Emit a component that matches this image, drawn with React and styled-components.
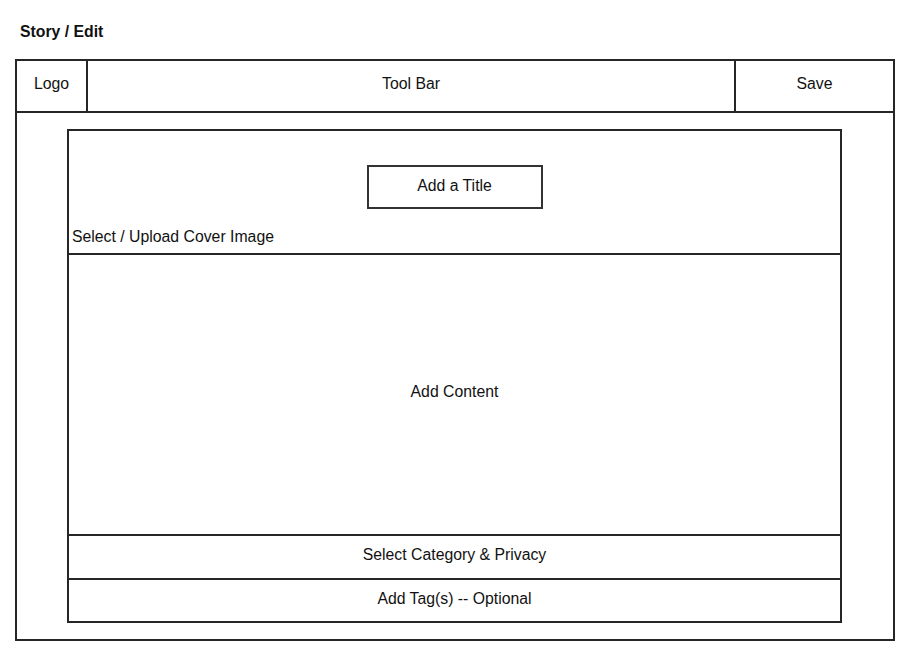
import React from 'react'
import styled, { createGlobalStyle } from 'styled-components'

const GlobalStyle = createGlobalStyle`
  * {
    box-sizing: border-box;
  }
  body {
    margin: 0;
    background: #ffffff;
    font-family: 'Liberation Sans', Arial, sans-serif;
    color: #111111;
  }
`

const Page = styled.div`
  width: 912px;
  height: 665px;
  padding: 23px 0 0 15px;
`

const PageTitle = styled.h1`
  margin: 0 0 0 5px;
  font-size: 15.8px;
  line-height: 18px;
  font-weight: 700;
`

const Frame = styled.div`
  margin-top: 18px;
  width: 880px;
  height: 582px;
  border: 2px solid #262626;
  display: flex;
  flex-direction: column;
`

const TopBar = styled.div`
  height: 52px;
  display: flex;
  border-bottom: 2px solid #262626;
  flex-shrink: 0;
`

const BarCell = styled.div`
  width: ${(p) => (p.$width ? `${p.$width}px` : 'auto')};
  flex: ${(p) => (p.$width ? 'none' : '1')};
  display: flex;
  align-items: center;
  justify-content: center;
  font-size: 15.8px;
  padding-bottom: 4px;
  border-left: ${(p) => (p.$divider ? '2px solid #262626' : 'none')};
`

const Body = styled.div`
  flex: 1;
  padding: 16px 0 16px 50px;
`

const Editor = styled.div`
  width: 775px;
  height: 494px;
  border: 2px solid #262626;
  display: flex;
  flex-direction: column;
`

const CoverSection = styled.div`
  height: 122px;
  display: flex;
  flex-direction: column;
  align-items: center;
  padding-top: 34px;
`

const TitleBox = styled.div`
  width: 176px;
  height: 44px;
  border: 2px solid #333333;
  display: flex;
  align-items: center;
  justify-content: center;
  font-size: 15.8px;
  padding-bottom: 2px;
`

const CoverLabel = styled.div`
  align-self: stretch;
  margin-top: auto;
  margin-bottom: 7px;
  padding-left: 3px;
  font-size: 15.8px;
  line-height: 18px;
`

const Section = styled.div`
  height: ${(p) => p.$height}px;
  border-top: 2px solid #262626;
  display: flex;
  align-items: center;
  justify-content: center;
  font-size: 15.8px;
  padding-bottom: ${(p) => p.$lift || 0}px;
`

export default function App() {
  return (
    <Page>
      <GlobalStyle />
      <PageTitle>Story / Edit</PageTitle>
      <Frame>
        <TopBar>
          <BarCell $width={69}>Logo</BarCell>
          <BarCell $divider>Tool Bar</BarCell>
          <BarCell $width={159} $divider>
            Save
          </BarCell>
        </TopBar>
        <Body>
          <Editor>
            <CoverSection>
              <TitleBox>Add a Title</TitleBox>
              <CoverLabel>Select / Upload Cover Image</CoverLabel>
            </CoverSection>
            <Section $height={281} $lift={5}>
              Add Content
            </Section>
            <Section $height={44} $lift={4}>
              Select Category &amp; Privacy
            </Section>
            <Section $height={43} $lift={3}>
              Add Tag(s) -- Optional
            </Section>
          </Editor>
        </Body>
      </Frame>
    </Page>
  )
}
